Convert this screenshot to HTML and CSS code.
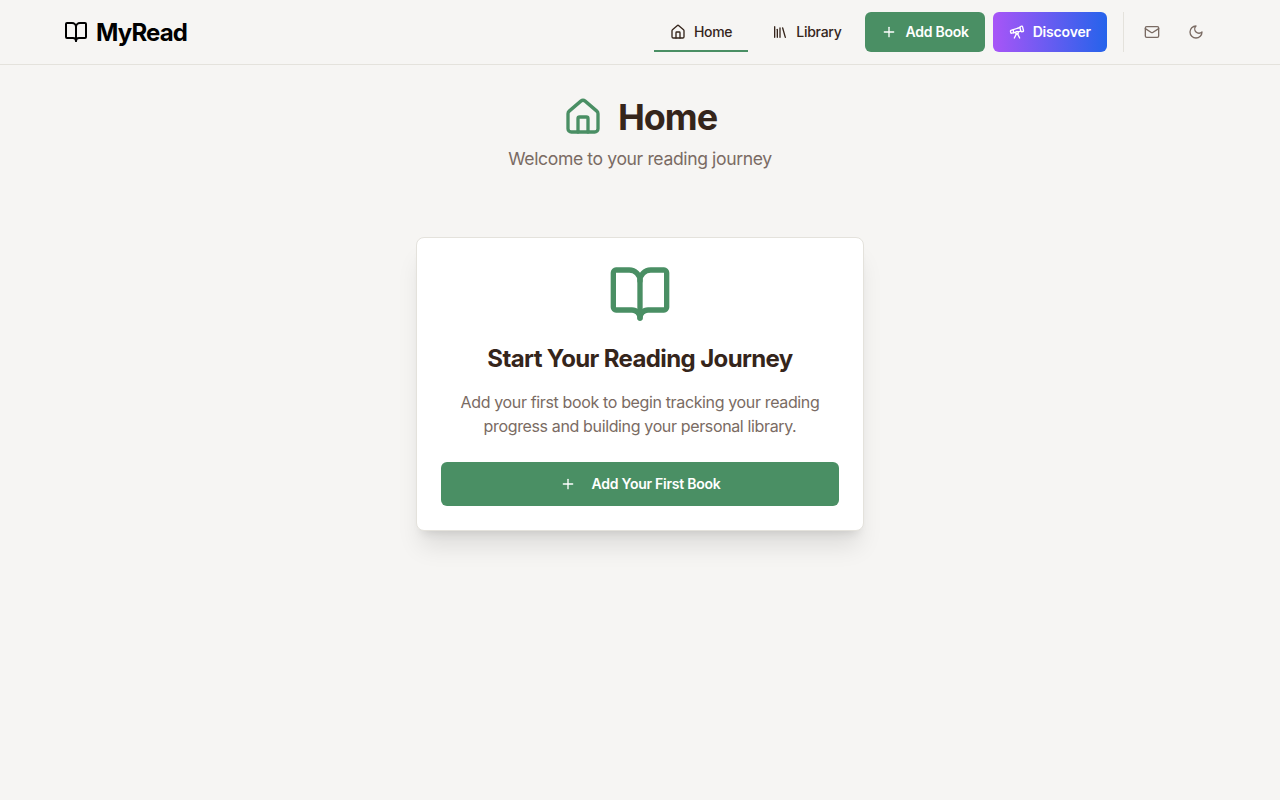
FILE: index.html
```html
<!DOCTYPE html>
<html lang="en">
<head>
    <meta charset="UTF-8">
    <meta name="viewport" content="width=device-width, initial-scale=1.0">
    <title>MyRead - Home</title>
    <link rel="stylesheet" href="styles.css">
</head>
<body>
    <header class="navbar">
        <div class="navbar-inner">
            <a href="#" class="logo">
                <svg class="icon logo-icon" viewBox="0 0 24 24"><path d="M12 7v14"/><path d="M3 18a1 1 0 0 1-1-1V4a1 1 0 0 1 1-1h5a4 4 0 0 1 4 4 4 4 0 0 1 4-4h5a1 1 0 0 1 1 1v13a1 1 0 0 1-1 1h-6a3 3 0 0 0-3 3 3 3 0 0 0-3-3z"/></svg>
                <span>MyRead</span>
            </a>
            <nav class="nav-links">
                <a href="#" class="nav-link active">
                    <svg class="icon icon-sm" viewBox="0 0 24 24"><path d="M15 21v-8a1 1 0 0 0-1-1h-4a1 1 0 0 0-1 1v8"/><path d="M3 10a2 2 0 0 1 .709-1.528l7-5.999a2 2 0 0 1 2.582 0l7 5.999A2 2 0 0 1 21 10v9a2 2 0 0 1-2 2H5a2 2 0 0 1-2-2z"/></svg>
                    Home
                </a>
                <a href="#" class="nav-link">
                    <svg class="icon icon-sm" viewBox="0 0 24 24"><path d="m16 6 4 14"/><path d="M12 6v14"/><path d="M8 8v12"/><path d="M4 4v16"/></svg>
                    Library
                </a>
                <a href="#" class="btn btn-add">
                    <svg class="icon icon-sm" viewBox="0 0 24 24"><path d="M5 12h14"/><path d="M12 5v14"/></svg>
                    Add Book
                </a>
                <a href="#" class="btn btn-discover">
                    <svg class="icon icon-sm" viewBox="0 0 24 24"><path d="m10.065 12.493-6.18 1.318a.934.934 0 0 1-1.108-.702l-.537-2.15a1.07 1.07 0 0 1 .691-1.265l13.504-4.44"/><path d="m13.56 11.747 4.332-.924"/><path d="m16 21-3.105-6.21"/><path d="M16.485 5.94a2 2 0 0 1 1.455-2.425l1.09-.272a1 1 0 0 1 1.212.727l1.515 6.06a1 1 0 0 1-.727 1.213l-1.09.272a2 2 0 0 1-2.425-1.455z"/><path d="m6.158 8.633 1.114 4.456"/><path d="m8 21 3.105-6.21"/><circle cx="12" cy="13" r="2"/></svg>
                    Discover
                </a>
                <div class="nav-divider"></div>
                <a href="#" class="icon-btn">
                    <svg class="icon icon-sm" viewBox="0 0 24 24"><rect x="2" y="4" width="20" height="16" rx="2"/><path d="m22 7-8.97 5.7a1.94 1.94 0 0 1-2.06 0L2 7"/></svg>
                </a>
                <a href="#" class="icon-btn">
                    <svg class="icon icon-sm" viewBox="0 0 24 24"><path d="M12 3a6 6 0 0 0 9 9 9 9 0 1 1-9-9Z"/></svg>
                </a>
            </nav>
        </div>
    </header>

    <main class="content">
        <div class="page-header">
            <h1>
                <svg class="icon icon-title" viewBox="0 0 24 24"><path d="M15 21v-8a1 1 0 0 0-1-1h-4a1 1 0 0 0-1 1v8"/><path d="M3 10a2 2 0 0 1 .709-1.528l7-5.999a2 2 0 0 1 2.582 0l7 5.999A2 2 0 0 1 21 10v9a2 2 0 0 1-2 2H5a2 2 0 0 1-2-2z"/></svg>
                Home
            </h1>
            <p>Welcome to your reading journey</p>
        </div>

        <div class="empty-card">
            <svg class="icon icon-empty" viewBox="0 0 24 24"><path d="M12 7v14"/><path d="M3 18a1 1 0 0 1-1-1V4a1 1 0 0 1 1-1h5a4 4 0 0 1 4 4 4 4 0 0 1 4-4h5a1 1 0 0 1 1 1v13a1 1 0 0 1-1 1h-6a3 3 0 0 0-3 3 3 3 0 0 0-3-3z"/></svg>
            <h2>Start Your Reading Journey</h2>
            <p>Add your first book to begin tracking your reading progress and building your personal library.</p>
            <a href="#" class="btn btn-add btn-wide">
                <svg class="icon icon-sm" viewBox="0 0 24 24"><path d="M5 12h14"/><path d="M12 5v14"/></svg>
                Add Your First Book
            </a>
        </div>
    </main>
</body>
</html>
```

FILE: styles.css
```css
* {
    box-sizing: border-box;
}
body {
    font-family: Inter, 'Liberation Sans', sans-serif;
    background: #f6f5f3;
    color: #35251b;
    margin: 0;
    min-height: 100vh;
}
a {
    text-decoration: none;
    color: inherit;
}
.icon {
    fill: none;
    stroke: currentColor;
    stroke-width: 2;
    stroke-linecap: round;
    stroke-linejoin: round;
    flex-shrink: 0;
}
.icon-sm {
    width: 16px;
    height: 16px;
}
.navbar {
    height: 65px;
    border-bottom: 1px solid #e4e2dc;
}
.navbar-inner {
    max-width: 1152px;
    height: 100%;
    margin: 0 auto;
    display: flex;
    align-items: center;
    justify-content: space-between;
}
.logo {
    display: flex;
    align-items: center;
    gap: 8px;
    font-size: 24px;
    font-weight: 700;
    letter-spacing: -0.035em;
    color: #000;
}
.logo-icon {
    width: 24px;
    height: 24px;
}
.nav-links {
    display: flex;
    align-items: center;
    gap: 8px;
}
.nav-link {
    position: relative;
    display: flex;
    align-items: center;
    gap: 8px;
    height: 40px;
    padding: 0 16px;
    font-size: 14px;
    line-height: 18px;
    font-weight: 500;
    letter-spacing: -0.02em;
}
.nav-link.active::after {
    content: '';
    position: absolute;
    left: 0;
    right: 0;
    bottom: 0;
    height: 2px;
    background: #4a8f64;
}
.btn {
    display: flex;
    align-items: center;
    justify-content: center;
    gap: 8px;
    height: 40px;
    padding: 0 16px;
    border-radius: 6px;
    font-size: 14px;
    line-height: 18px;
    font-weight: 600;
    letter-spacing: -0.012em;
    color: #fff;
}
.btn-add {
    background: #4a8f64;
    letter-spacing: -0.018em;
}
.btn-discover {
    background: linear-gradient(90deg, #a855f7, #2563eb);
}
.nav-divider {
    width: 1px;
    height: 40px;
    background: #e4e2dc;
    margin: 0 0 0 8px;
}
.icon-btn {
    display: flex;
    align-items: center;
    justify-content: center;
    width: 40px;
    height: 40px;
    color: #7a6b63;
}
.icon-btn + .icon-btn {
    margin-left: -4px;
}
.content {
    padding-top: 32px;
}
.page-header {
    text-align: center;
    margin-bottom: 64px;
}
.page-header h1 {
    display: flex;
    align-items: center;
    justify-content: center;
    gap: 15px;
    margin: 0 0 8px 0;
    font-size: 36px;
    line-height: 40px;
    font-weight: 700;
    letter-spacing: -0.028em;
}
.icon-title {
    width: 40px;
    height: 40px;
    color: #4a8f64;
}
.page-header p {
    margin: 0;
    font-size: 17.6px;
    line-height: 28px;
    letter-spacing: -0.022em;
    color: #7a6b63;
}
.empty-card {
    width: 448px;
    margin: 0 auto;
    padding: 24px;
    background: #fff;
    border: 1px solid #e4e2dc;
    border-radius: 8px;
    box-shadow: 0 20px 25px -5px rgba(0,0,0,0.1), 0 8px 10px -6px rgba(0,0,0,0.1);
    text-align: center;
}
.icon-empty {
    display: block;
    width: 64px;
    height: 64px;
    margin: 0 auto 16px auto;
    color: #4a8f64;
}
.empty-card h2 {
    margin: 0 0 14px 0;
    font-size: 24px;
    line-height: 34px;
    font-weight: 700;
    letter-spacing: -0.026em;
}
.empty-card p {
    margin: 0 0 24px 0;
    font-size: 16px;
    line-height: 24px;
    letter-spacing: -0.0225em;
    color: #7a6b63;
}
.btn-wide {
    height: 44px;
    gap: 16px;
}
```
